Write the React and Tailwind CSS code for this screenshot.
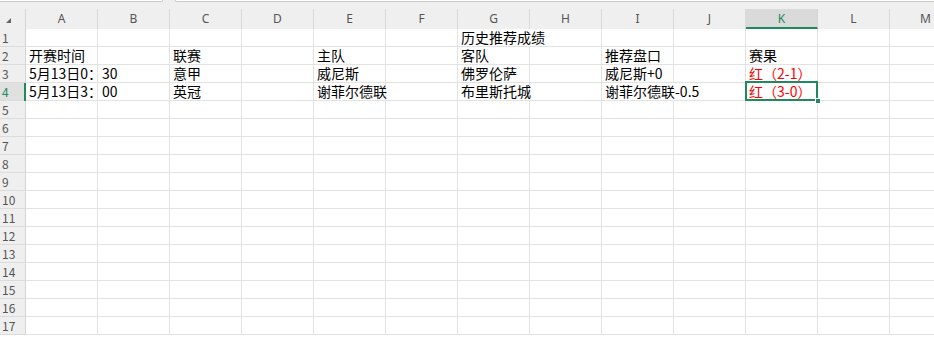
import React from "react";

const COLS = ["A", "B", "C", "D", "E", "F", "G", "H", "I", "J", "K", "L", "M"];

const DATA = {
  1: { G: { text: "历史推荐成绩", spill: true } },
  2: {
    A: { text: "开赛时间" },
    C: { text: "联赛" },
    E: { text: "主队" },
    G: { text: "客队" },
    I: { text: "推荐盘口" },
    K: { text: "赛果" },
  },
  3: {
    A: { text: "5月13日0：30" },
    C: { text: "意甲" },
    E: { text: "威尼斯" },
    G: { text: "佛罗伦萨" },
    I: { text: "威尼斯+0" },
    K: { text: "红（2-1）", red: true },
  },
  4: {
    A: { text: "5月13日3：00" },
    C: { text: "英冠" },
    E: { text: "谢菲尔德联" },
    G: { text: "布里斯托城" },
    I: { text: "谢菲尔德联-0.5", spill: true },
    K: { text: "红（3-0）", red: true },
  },
};

const SELECTED = { row: 4, col: "K" };

function Cell({ row, col }) {
  const cell = DATA[row]?.[col];
  const selected = SELECTED.row === row && SELECTED.col === col;
  return (
    <div
      className={`relative h-[18px] w-[72px] shrink-0 border-b border-[#e2e2e2] ${
        cell?.spill ? "border-r border-r-transparent" : "border-r"
      }`}
    >
      {cell ? (
        <span
          className={`absolute left-[3px] top-0 z-10 whitespace-nowrap text-[14px] leading-[17px] ${
            cell.red ? "text-[#ff0000]" : "text-black"
          }`}
        >
          {cell.text}
        </span>
      ) : null}
      {selected ? (
        <>
          <div className="absolute -left-[1px] -top-[2px] -right-[1px] -bottom-[1px] z-20 border-2 border-[#1e8a5e]" />
          <div className="absolute -right-[4px] -bottom-[4px] z-30 h-[6px] w-[6px] border border-white bg-[#1e8a5e]" />
        </>
      ) : null}
    </div>
  );
}

function Row({ n }) {
  const active = SELECTED.row === n;
  return (
    <div className="flex h-[18px]">
      <div
        className={`relative flex h-[18px] w-[26px] shrink-0 items-center border-b border-r border-b-[#dcdcdc] border-r-[#d4d4d4] pl-[2px] text-[12px] ${
          active ? "bg-[#e0e0e0] text-[#1e8a5e]" : "bg-[#efefef] text-[#555]"
        }`}
      >
        {n}
        {active ? <div className="absolute -right-[1px] top-0 h-[18px] w-[2px] bg-[#1e8a5e]" /> : null}
      </div>
      {COLS.map((c) => (
        <Cell key={c} row={n} col={c} />
      ))}
    </div>
  );
}

export default function App() {
  return (
    <div
      className="h-[337px] w-[934px] overflow-hidden bg-white"
      style={{ fontFamily: '"Noto Sans CJK SC", "Noto Sans", sans-serif' }}
    >
      {/* edge of formula bar */}
      <div className="flex h-[9px] bg-[#efefef]">
        <div className="h-[2px] w-[163px] rounded-br-[4px] border-b border-r border-[#c9c9c9] bg-white" />
        <div className="ml-[12px] h-[2px] flex-1 rounded-bl-[4px] border-b border-l border-[#c9c9c9] bg-white" />
      </div>

      {/* column headers */}
      <div className="flex h-[20px]" style={{ fontFamily: '"Noto Sans", sans-serif' }}>
        <div className="relative w-[26px] shrink-0 border-r border-[#d4d4d4] bg-[#efefef]">
          <svg className="absolute left-[6px] top-[9px]" width="5" height="5" viewBox="0 0 5 5">
            <polygon points="5,0 5,5 0,5" fill="#666" />
          </svg>
        </div>
        {COLS.map((c) =>
          c === SELECTED.col ? (
            <div
              key={c}
              className="flex w-[72px] shrink-0 items-center justify-center border-b-2 border-r border-b-[#1e8a5e] border-r-[#d6d6d6] bg-[#dadada] pt-[2px] text-[12px] text-[#1e8a5e]"
            >
              {c}
            </div>
          ) : (
            <div
              key={c}
              className="flex w-[72px] shrink-0 items-center justify-center border-r border-[#d9d9d9] bg-[#efefef] text-[12px] text-[#555]"
            >
              {c}
            </div>
          )
        )}
      </div>

      {Array.from({ length: 17 }, (_, i) => (
        <Row key={i + 1} n={i + 1} />
      ))}
    </div>
  );
}
